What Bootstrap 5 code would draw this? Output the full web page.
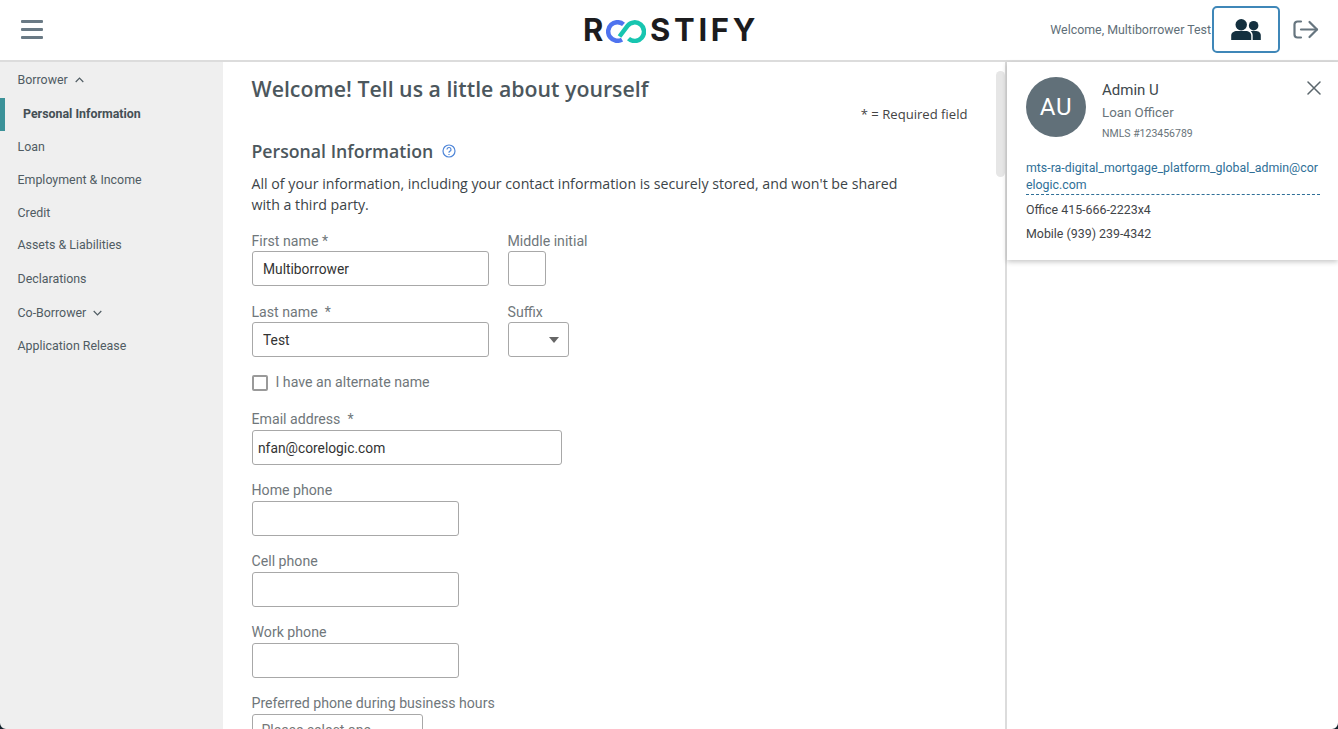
<!DOCTYPE html>
<html lang="en">
<head>
<meta charset="UTF-8">
<meta name="viewport" content="width=device-width, initial-scale=1.0">
<title>Personal Information</title>
<link href="https://cdn.jsdelivr.net/npm/bootstrap@5.3.0/dist/css/bootstrap.min.css" rel="stylesheet">
<style>
html, body { height: 100%; }
body { height: 729px; overflow: hidden; font-family: Roboto, "Liberation Sans", sans-serif; font-size: 14px; color: #3f4a50; background: #fff; position: relative; }
.top-bar { height: 62px; border-bottom: 2px solid #dcdcdc; padding-left: 21px; }
.burger { width: 22px; display: flex; flex-direction: column; gap: 5px; margin-bottom: 2px; }
.burger span { height: 3px; background: #6a7a85; border-radius: 1px; }
.brand { position: absolute; left: 583px; top: 13px; height: 34px; font-family: Inter, sans-serif; font-weight: 700; font-size: 31px; line-height: 34px; letter-spacing: 3.7px; color: #1c1c1e; white-space: nowrap; }
.brand svg { margin: 0 4px 0 -1px; vertical-align: -2px; }
.welcome { font-size: 12.4px; color: #5f6f78; margin-right: 1px; }
.people-btn { width: 68px; height: 47px; margin-top: -1px; border: 2.5px solid #3f87b8; border-radius: 5px; background: #fff; padding: 0; }
.exit-btn { width: 52px; padding-bottom: 2px; margin-right: 6px; }
.shell { height: 667px; }
.side { width: 223px; background: #efefef; flex: none; padding-top: 1px; }
.side-link { height: 33px; padding-left: 17.5px; font-size: 12.4px; color: #505c63; display: flex; align-items: center; gap: 7px; }
.side-link.tall { height: 34px; }
.side-link.short { height: 32px; }
.side-link.first-link { height: 35px; padding-bottom: 1px; }
.side-link.on { border-left: 5px solid #3c9299; padding-left: 18px; font-weight: 700; color: #454f55; }
.main-pane { width: 782px; flex: none; position: relative; padding: 12px 0 0 28.5px; overflow: hidden; }
.thumb { position: absolute; right: 0; top: 9px; width: 9px; height: 106px; background: #e6e6e6; border-radius: 5px; }
.page-title { font-family: "Open Sans", sans-serif; font-weight: 600; font-size: 21.3px; line-height: 30px; color: #4c575d; margin: 0; }
.req-note { font-family: "Open Sans", sans-serif; width: 716px; text-align: right; font-size: 13.1px; line-height: 20px; color: #444; }
.sec-title { font-family: "Open Sans", sans-serif; font-weight: 600; font-size: 17.7px; line-height: 26px; color: #4c575d; margin: 14px 0 0; display: flex; align-items: center; gap: 9px; }
.intro { font-family: "Open Sans", sans-serif; font-size: 14.2px; line-height: 21px; color: #3c4448; width: 655px; margin: 9px 0 17px; }
.fld-label { font-size: 14.15px; line-height: 18px; color: #70777b; margin: 0 0 2px; display: block; white-space: nowrap; }
.tight .fld-label { margin-bottom: 1px; }
.tight { gap: 19px; margin-bottom: 17px; }
.fld { height: 35px; border: 1px solid #a8a8a8; border-radius: 3px; background: #fff; padding: 0 10.5px; font-size: 13.8px; color: #333; display: block; font-family: Roboto, sans-serif; outline: 0; }
.w-name { width: 237px; }
.w-init { width: 38px; }
.w-mail { width: 310px; padding: 0 5.5px; }
.w-phone { width: 207px; }
.suffix-box { width: 61px; position: relative; }
.caret-dn { position: absolute; right: 9px; top: 14px; width: 0; height: 0; border-left: 5.5px solid transparent; border-right: 5.5px solid transparent; border-top: 6px solid #666; }
.alt-box { width: 16px; height: 16px; border: 2px solid #9a9a9a; border-radius: 2px; margin-right: 8px; flex: none; }
.alt-row { color: #70777b; font-size: 14.15px; margin: 0 0 18px; height: 18px; }
.stack { margin-bottom: 16px; }
.pick { width: 171px; height: 35px; border: 1px solid #a8a8a8; border-radius: 3px; padding: 5px 9px; color: #777; position: relative; }
.pick .caret-dn { border-top-color: #bbb; }
.info-pane { flex: 1; border-left: 2px solid #dcdcdc; position: relative; }
.agent-card { height: 198px; background: #fff; box-shadow: 0 2px 5px rgba(0,0,0,.22); padding: 15px 18px 0 19px; position: relative; }
.avatar { width: 60px; height: 60px; border-radius: 50%; background: #617079; color: #fff; font-size: 24px; letter-spacing: .8px; flex: none; }
.agent-name { font-size: 15px; line-height: 20px; color: #3e474c; margin-top: 3px; }
.agent-role { font-size: 13.3px; line-height: 20px; color: #69747a; margin-top: 3px; }
.agent-nmls { font-size: 10.5px; line-height: 14px; color: #69747a; margin-top: 4px; }
.close-x { position: absolute; right: 17px; top: 19px; }
.agent-mail { display: block; margin-top: 19px; font-size: 12.35px; line-height: 17px; color: #2f6f97; word-break: break-all; border-bottom: 1px dashed #2f6f97; text-decoration: none; }
.agent-line { font-size: 12.4px; line-height: 16px; color: #3f4448; margin-top: 8px; }
.agent-line.first { margin-top: 7px; }
.corner { position: absolute; bottom: 0; width: 6px; height: 6px; }
</style>
</head>
<body>
<header class="top-bar d-flex align-items-center justify-content-between">
    <div class="burger"><span></span><span></span><span></span></div>
    <div class="brand">R<svg width="40" height="23" viewBox="0 0 40 23" fill="none" stroke-width="4.500"><path d="M17.500 4.400 A9.300 9.300 0 1 0 16 19.600" stroke="#4f73ef"/><path d="M13.500 16.500 L21.500 5.800 A9.300 9.300 0 1 1 22.500 18.600" stroke="#17c5b0"/></svg>STIFY</div>
    <div class="d-flex align-items-center">
        <span class="welcome">Welcome, Multiborrower Test</span>
        <button class="people-btn d-flex align-items-center justify-content-center" type="button">
            <svg width="32" height="21" viewBox="0 0 33 22" fill="#14303f"><circle cx="11.500" cy="6" r="6"/><path d="M1 22 V17.500 C1 14 4 12.500 7 12.500 H16 C19.500 12.500 22 14.500 22 17.500 V22 Z"/><circle cx="24.500" cy="7" r="5"/><path d="M23.500 22 V17 C23.500 15 22.500 13.500 21.500 12.800 C22.500 12.500 24 12.500 26 12.500 C29.500 12.500 32 14 32 17 V22 Z"/></svg>
        </button>
        <div class="exit-btn d-flex justify-content-center">
            <svg width="26" height="19" viewBox="0 0 26 19" fill="none" stroke="#66757f" stroke-width="2.200" stroke-linecap="round" stroke-linejoin="round"><path d="M8 1.500 H4.500 A3 3 0 0 0 1.500 4.500 V14.500 A3 3 0 0 0 4.500 17.500 H8"/><path d="M8 9.500 H24"/><path d="M16.500 2 L24 9.500 L16.500 17"/></svg>
        </div>
    </div>
</header>
<div class="shell d-flex">
    <nav class="side">
        <div class="side-link first-link">Borrower <svg width="9" height="6" viewBox="0 0 9 6" fill="none" stroke="#505c63" stroke-width="1.200"><path d="M.7 5 L4.500 1.200 L8.300 5"/></svg></div>
        <div class="side-link on">Personal Information</div>
        <div class="side-link">Loan</div>
        <div class="side-link">Employment &amp; Income</div>
        <div class="side-link short">Credit</div>
        <div class="side-link">Assets &amp; Liabilities</div>
        <div class="side-link tall">Declarations</div>
        <div class="side-link tall">Co-Borrower <svg width="9" height="6" viewBox="0 0 9 6" fill="none" stroke="#505c63" stroke-width="1.200"><path d="M.7 1 L4.500 4.800 L8.300 1"/></svg></div>
        <div class="side-link">Application Release</div>
    </nav>
    <main class="main-pane">
        <div class="thumb"></div>
        <h1 class="page-title">Welcome! Tell us a little about yourself</h1>
        <div class="req-note">* = Required field</div>
        <h2 class="sec-title">Personal Information
            <svg width="14" height="14" viewBox="0 0 14 14" fill="none" stroke="#4f86d8" stroke-width="1.200"><circle cx="7" cy="7" r="6"/><path d="M5 5.500 A2 2 0 1 1 7.600 7.400 C7 7.700 7 8 7 8.800"/><path d="M7 10 V11"/></svg>
        </h2>
        <p class="intro">All of your information, including your contact information is securely stored, and won't be shared with a third party.</p>
        <div class="d-flex tight">
            <div><label class="fld-label">First name *</label><input class="fld w-name" value="Multiborrower"></div>
            <div><label class="fld-label">Middle initial</label><input class="fld w-init"></div>
        </div>
        <div class="d-flex tight">
            <div><label class="fld-label">Last name &nbsp;*</label><input class="fld w-name" value="Test"></div>
            <div><label class="fld-label">Suffix</label><div class="fld suffix-box"><span class="caret-dn"></span></div></div>
        </div>
        <div class="alt-row d-flex align-items-center"><span class="alt-box"></span>I have an alternate name</div>
        <div class="stack"><label class="fld-label">Email address &nbsp;*</label><input class="fld w-mail" value="nfan@corelogic.com"></div>
        <div class="stack"><label class="fld-label">Home phone</label><input class="fld w-phone"></div>
        <div class="stack"><label class="fld-label">Cell phone</label><input class="fld w-phone"></div>
        <div class="stack"><label class="fld-label">Work phone</label><input class="fld w-phone"></div>
        <div><label class="fld-label">Preferred phone during business hours</label><div class="pick">Please select one<span class="caret-dn"></span></div></div>
    </main>
    <aside class="info-pane">
        <div class="agent-card">
            <div class="d-flex gap-3">
                <div class="avatar d-flex align-items-center justify-content-center">AU</div>
                <div>
                    <div class="agent-name">Admin U</div>
                    <div class="agent-role">Loan Officer</div>
                    <div class="agent-nmls">NMLS #123456789</div>
                </div>
            </div>
            <svg class="close-x" width="14" height="14" viewBox="0 0 14 14" stroke="#5b666c" stroke-width="1.500" stroke-linecap="round"><path d="M1 1 L13 13 M13 1 L1 13"/></svg>
            <a class="agent-mail" href="#">mts-ra-digital_mortgage_platform_global_admin@corelogic.com</a>
            <div class="agent-line first">Office 415-666-2223x4</div>
            <div class="agent-line">Mobile (939) 239-4342</div>
        </div>
    </aside>
</div>
<svg class="corner" style="left:0" viewBox="0 0 6 6"><path d="M0 0 A6 6 0 0 0 6 6 H0 Z" fill="#12222c"/></svg>
<svg class="corner" style="right:0" viewBox="0 0 6 6"><path d="M6 0 A6 6 0 0 1 0 6 H6 Z" fill="#12222c"/></svg>
<script src="https://cdn.jsdelivr.net/npm/bootstrap@5.3.0/dist/js/bootstrap.bundle.min.js"></script>
</body>
</html>
